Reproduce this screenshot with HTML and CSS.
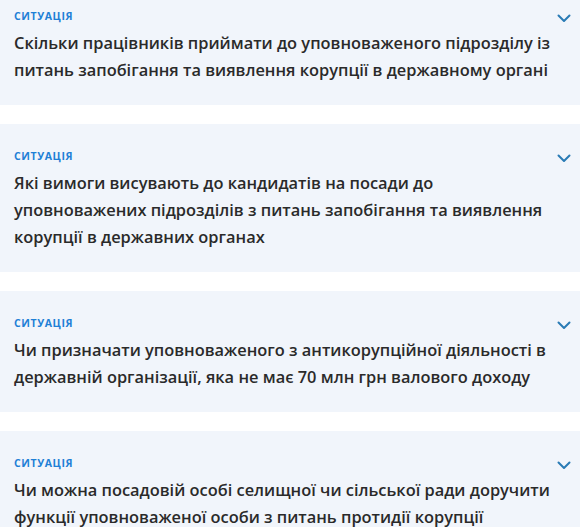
FILE: index.html
```html
<!DOCTYPE html>
<html lang="uk">
<head>
<meta charset="utf-8">
<link rel="stylesheet" href="styles.css">
</head>
<body>
<div class="list">
  <div class="card">
    <div class="head"><span class="label">Ситуація</span>
      <svg class="chev" width="14" height="9" viewBox="0 0 14 9"><path d="M1.5 1.5 L7 7 L12.5 1.5" fill="none" stroke="#2a7bb5" stroke-width="2" stroke-linecap="round" stroke-linejoin="round"/></svg>
    </div>
    <div class="title">Скільки працівників приймати до уповноваженого підрозділу із питань запобігання та виявлення корупції в державному органі</div>
  </div>
  <div class="card">
    <div class="head"><span class="label">Ситуація</span>
      <svg class="chev" width="14" height="9" viewBox="0 0 14 9"><path d="M1.5 1.5 L7 7 L12.5 1.5" fill="none" stroke="#2a7bb5" stroke-width="2" stroke-linecap="round" stroke-linejoin="round"/></svg>
    </div>
    <div class="title">Які вимоги висувають до кандидатів на посади до уповноважених підрозділів з питань запобігання та виявлення корупції в державних органах</div>
  </div>
  <div class="card">
    <div class="head"><span class="label">Ситуація</span>
      <svg class="chev" width="14" height="9" viewBox="0 0 14 9"><path d="M1.5 1.5 L7 7 L12.5 1.5" fill="none" stroke="#2a7bb5" stroke-width="2" stroke-linecap="round" stroke-linejoin="round"/></svg>
    </div>
    <div class="title">Чи призначати уповноваженого з антикорупційної діяльності в державній організації, яка не має 70 млн грн валового доходу</div>
  </div>
  <div class="card">
    <div class="head"><span class="label">Ситуація</span>
      <svg class="chev" width="14" height="9" viewBox="0 0 14 9"><path d="M1.5 1.5 L7 7 L12.5 1.5" fill="none" stroke="#2a7bb5" stroke-width="2" stroke-linecap="round" stroke-linejoin="round"/></svg>
    </div>
    <div class="title">Чи можна посадовій особі селищної чи сільської ради доручити функції уповноваженої особи з питань протидії корупції</div>
  </div>
</div>
</body>
</html>
```
FILE: styles.css
```css
html, body { margin: 0; padding: 0; background: #fff; }
body { font-family: "Open Sans", "Noto Sans", sans-serif; overflow: hidden; }
.list { display: flex; flex-direction: column; gap: 19px; margin-top: -16px; }
.card { background: #f1f5fb; padding: 25px 14px 22px 14px; }
.head { display: flex; justify-content: space-between; align-items: center; height: 14px; margin-bottom: 6px; }
.label { font-size: 10.5px; font-weight: 700; letter-spacing: 0.6px; text-transform: uppercase; color: #1e80d6; line-height: 14px; }
.chev { margin-right: -5px; margin-top: 4px; }
.title { font-size: 16.4px; font-weight: 600; line-height: 27px; color: #2a2a2a; }
```
